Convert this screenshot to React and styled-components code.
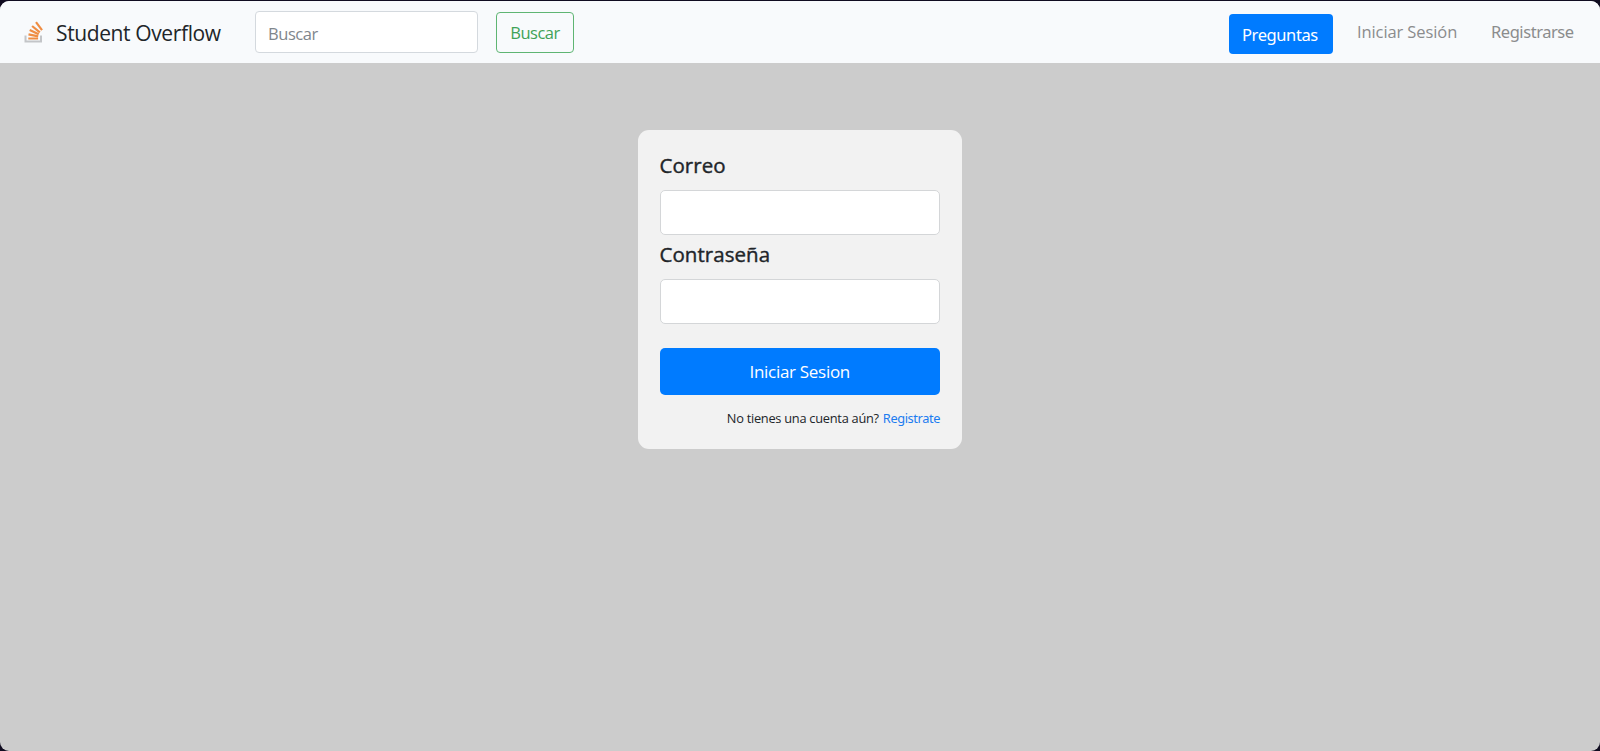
import React from "react";
import styled, { createGlobalStyle } from "styled-components";

const GlobalStyle = createGlobalStyle`
  * { box-sizing: border-box; }
  body {
    margin: 0;
    background: #100c20;
    color: #212529;
    font-family: "Open Sans", "Noto Sans", sans-serif;
    font-size: 16.5px;
    line-height: 24px;
    overflow: hidden;
  }
  a { text-decoration: none; }
  input, button { font: inherit; }
`;

const Window = styled.div`
  height: 750px;
  margin-top: 1px;
  background: #ccc;
  border-radius: 9px;
  overflow: hidden;
`;

const Navbar = styled.nav`
  display: flex;
  align-items: flex-start;
  height: 62px;
  padding: 0 25px 0 24px;
  background: #f8fafc;
`;

const Brand = styled.a`
  display: flex;
  align-items: center;
  width: 231px;
  height: 62px;
  color: #212529;
  white-space: nowrap;
`;

const Logo = styled.svg`
  width: 19px;
  height: 22px;
  margin-right: 13px;
`;

const BrandName = styled.span`
  padding-top: 2px;
  font-size: 21px;
  letter-spacing: ${(p) => p.$spacing}px;
`;

const Text = styled.span`
  letter-spacing: ${(p) => p.$spacing}px;
  font-family: ${(p) => (p.$humanist ? '"Noto Sans", sans-serif' : "inherit")};
`;

const SearchForm = styled.form`
  display: flex;
  align-items: flex-start;
`;

const SearchInput = styled.input`
  width: 223px;
  height: 42px;
  margin: 10px 18px 0 0;
  padding: 3px 12px 0;
  border: 1px solid #d4d9de;
  border-radius: 4px;
  background: #fff;
  letter-spacing: -0.45px;
  &::placeholder { color: #7f868c; opacity: 1; }
`;

const SearchButton = styled.button`
  width: 78px;
  height: 41px;
  margin-top: 11px;
  padding: 0;
  border: 1px solid #5fb573;
  border-radius: 4px;
  background: transparent;
  color: #3fa257;
`;

const NavLinks = styled.div`
  display: flex;
  margin-left: auto;
`;

const QuestionsButton = styled.a`
  width: 104px;
  height: 40px;
  margin: 13px 24px 0 0;
  padding: 9px 0 0 13px;
  border-radius: 4px;
  background: #007bff;
  color: #fff;
  white-space: nowrap;
`;

const NavLink = styled.a`
  width: ${(p) => p.$width}px;
  margin: 19px 0 0 ${(p) => p.$gap || 0}px;
  color: #8b8c8d;
  white-space: nowrap;
`;

const Main = styled.main`
  display: flex;
  justify-content: center;
  padding-top: 67px;
`;

const LoginCard = styled.form`
  display: flex;
  flex-direction: column;
  width: 324px;
  height: 319px;
  padding: 20px 22px 0 21.5px;
  border-radius: 11px;
  background: #f2f2f2;
`;

const Label = styled.label`
  height: 30px;
  margin-bottom: 10px;
  font-size: 20.5px;
  line-height: 30px;
  letter-spacing: ${(p) => p.$spacing}px;
  -webkit-text-stroke: 0.4px currentColor;
`;

const Field = styled.input`
  width: 100%;
  height: 45px;
  margin-bottom: ${(p) => p.$after}px;
  padding: 0 12px;
  border: 1px solid #d4d6d8;
  border-radius: 5px;
  background: #fff;
`;

const Submit = styled.button`
  width: 100%;
  height: 47px;
  border: 0;
  border-radius: 5px;
  background: #007bff;
  color: #fff;
  font-size: 17px;
`;

const Hint = styled.p`
  display: flex;
  justify-content: flex-end;
  gap: 4px;
  margin: 12px 0 0;
  font-size: 12.8px;
  line-height: 22px;
  white-space: nowrap;
`;

const HintLink = styled.a`
  color: #1c7cf0;
  font-family: "Noto Sans", sans-serif;
  letter-spacing: ${(p) => p.$spacing}px;
`;

function StackLogo() {
  return (
    <Logo viewBox="0 0 19 22" fill="none" aria-hidden="true">
      <path d="M1.5 14.5v6h15.5v-6" stroke="#c3c5c8" strokeWidth="2" />
      <g stroke="#ef8d43" strokeWidth="2.2">
        <path d="M4.3 17.5h9.8" />
        <path d="M4.5 13.3l9.7 2" />
        <path d="M5.7 9.1l9 4.2" />
        <path d="M8.1 5l7.7 6.3" />
        <path d="M12 1.2l6 8" />
      </g>
    </Logo>
  );
}

export default function App() {
  return (
    <>
      <GlobalStyle />
      <Window>
        <Navbar>
          <Brand href="#">
            <StackLogo />
            <BrandName $spacing={-0.38}>Student Overflow</BrandName>
          </Brand>
          <SearchForm>
            <SearchInput placeholder="Buscar" aria-label="Buscar" />
            <SearchButton type="button"><Text $spacing={-0.5}>Buscar</Text></SearchButton>
          </SearchForm>
          <NavLinks>
            <QuestionsButton href="#"><Text $humanist $spacing={-0.4}>Preguntas</Text></QuestionsButton>
            <NavLink href="#" $width={101}><Text $spacing={-0.1}>Iniciar Sesión</Text></NavLink>
            <NavLink href="#" $width={84} $gap={33}><Text $humanist $spacing={-0.45}>Registrarse</Text></NavLink>
          </NavLinks>
        </Navbar>
        <Main>
          <LoginCard>
            <Label htmlFor="email" $spacing={0.05}>Correo</Label>
            <Field id="email" type="email" $after={4} />
            <Label htmlFor="password" $spacing={0.05}>Contraseña</Label>
            <Field id="password" type="password" $after={24} />
            <Submit type="button"><Text $spacing={-0.3}>Iniciar Sesion</Text></Submit>
            <Hint>
              <Text $spacing={-0.26}>No tienes una cuenta aún?</Text>
              <HintLink href="#" $spacing={-0.4}>Registrate</HintLink>
            </Hint>
          </LoginCard>
        </Main>
      </Window>
    </>
  );
}
